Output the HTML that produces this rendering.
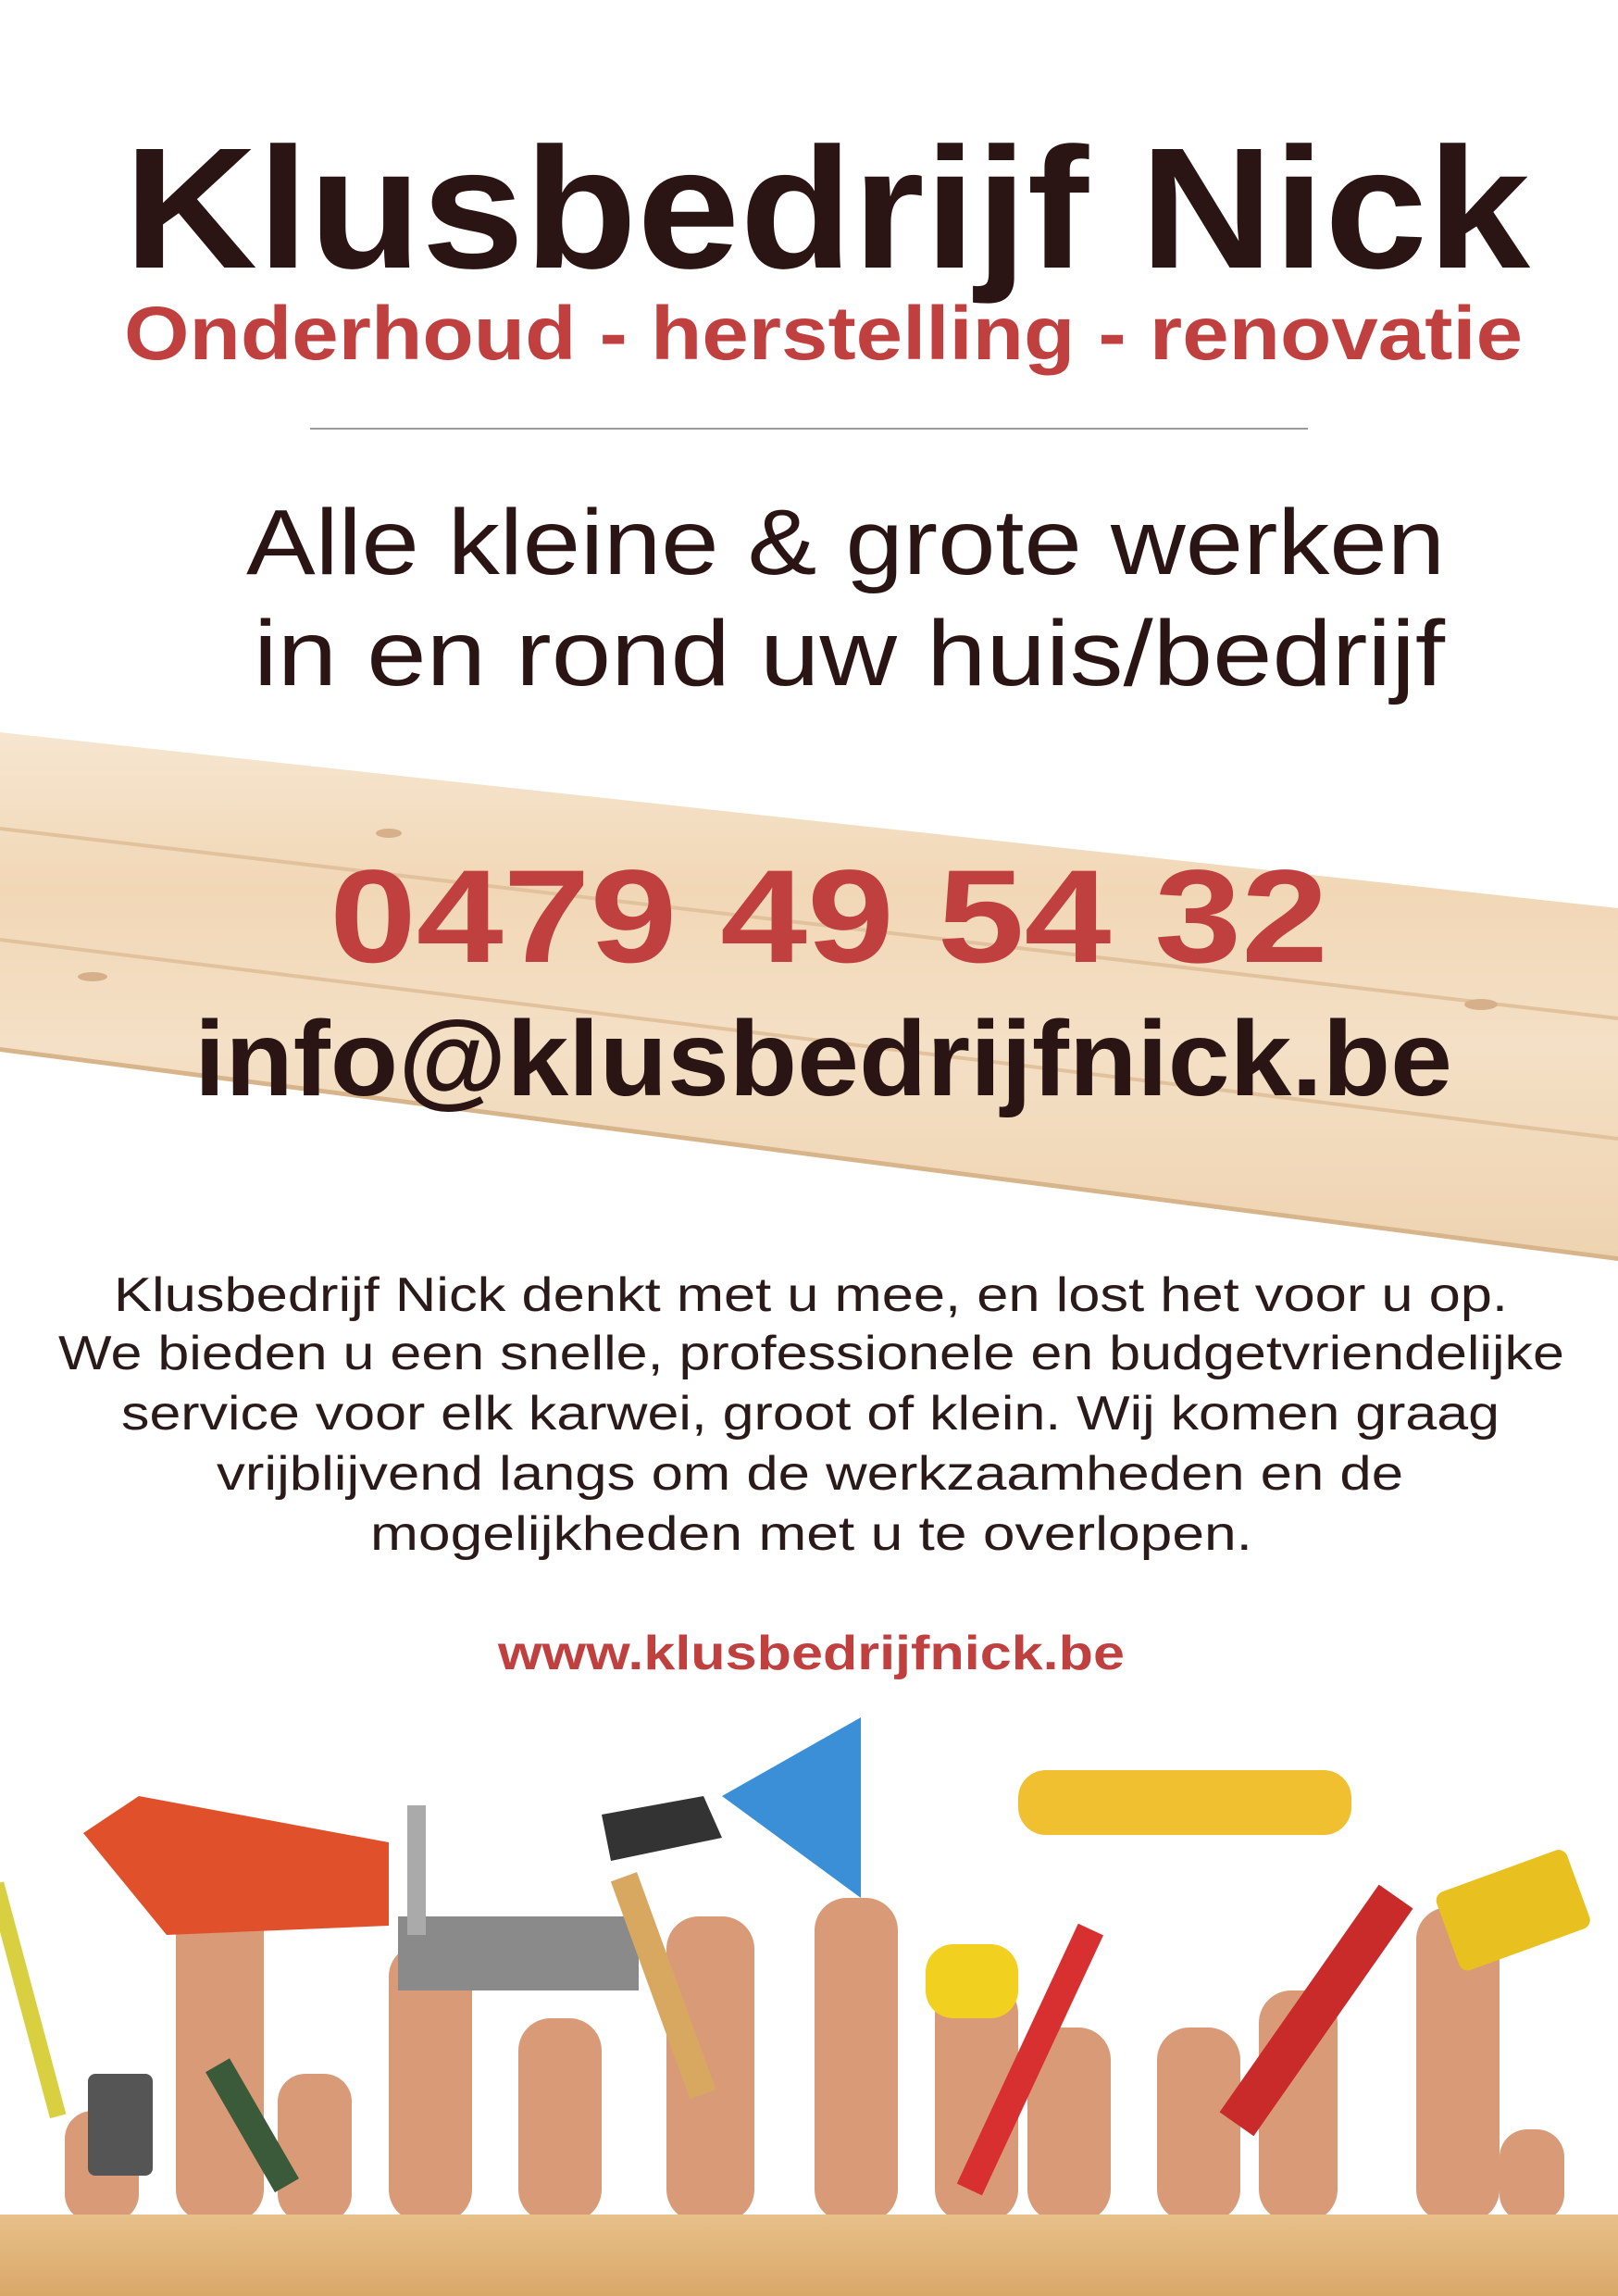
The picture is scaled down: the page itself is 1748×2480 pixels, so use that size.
<!DOCTYPE html>
<html><head><meta charset="utf-8"><style>
html,body{margin:0;padding:0;background:#fff;}
svg{display:block;}
text{font-family:"Liberation Sans",sans-serif;}
</style></head><body>
<svg width="1748" height="2480" viewBox="0 0 1748 2480" xmlns="http://www.w3.org/2000/svg">
<defs>
<linearGradient id="wood" x1="0" y1="0" x2="0" y2="1">
<stop offset="0" stop-color="#f6e6d0"/><stop offset="0.3" stop-color="#f1d7b6"/><stop offset="0.6" stop-color="#f4e0c6"/><stop offset="1" stop-color="#eed3b0"/>
</linearGradient>
<linearGradient id="strip" x1="0" y1="0" x2="0" y2="1"><stop offset="0" stop-color="#e8c08a"/><stop offset="1" stop-color="#d9a868"/></linearGradient>
</defs>
<rect width="1748" height="2480" fill="#fff"/>
<text x="134" y="289" font-size="186" font-weight="bold" fill="#2b1414" textLength="1519" lengthAdjust="spacingAndGlyphs">Klusbedrijf Nick</text>
<text x="134" y="388" font-size="82" font-weight="bold" fill="#c0403f" textLength="1511" lengthAdjust="spacingAndGlyphs">Onderhoud - herstelling - renovatie</text>
<rect x="335" y="462" width="1078" height="2" fill="#9a9a9a"/>
<text x="266" y="620" font-size="100" fill="#2b1414" textLength="1295" lengthAdjust="spacingAndGlyphs">Alle kleine &amp; grote werken</text>
<text x="274" y="740" font-size="100" fill="#2b1414" textLength="1287" lengthAdjust="spacingAndGlyphs">in en rond uw huis/bedrijf</text>
<polygon points="0,791 1748,981 1748,1357 0,1131" fill="url(#wood)"/>
<line x1="0" y1="895" x2="1748" y2="1100" stroke="#e2c29c" stroke-width="4"/>
<line x1="0" y1="1015" x2="1748" y2="1230" stroke="#e2c29c" stroke-width="4"/>
<polygon points="0,1131 1748,1357 1748,1362 0,1136" fill="#d8b48a"/>
<ellipse cx="420" cy="900" rx="14" ry="5" fill="#d6b08a"/>
<ellipse cx="1600" cy="1085" rx="18" ry="6" fill="#d6b08a"/>
<ellipse cx="100" cy="1055" rx="16" ry="5" fill="#d6b08a"/>
<text x="356" y="1039" font-size="143" font-weight="bold" fill="#c0403f" textLength="1079" lengthAdjust="spacingAndGlyphs">0479 49 54 32</text>
<text x="210" y="1183" font-size="115" font-weight="bold" fill="#2b1414" textLength="1359" lengthAdjust="spacingAndGlyphs">info@klusbedrijfnick.be</text>
<g font-size="52" fill="#2b1a1a">
<text x="123" y="1416" textLength="1506" lengthAdjust="spacingAndGlyphs">Klusbedrijf Nick denkt met u mee, en lost het voor u op.</text>
<text x="63" y="1479" textLength="1627" lengthAdjust="spacingAndGlyphs">We bieden u een snelle, professionele en budgetvriendelijke</text>
<text x="131" y="1544" textLength="1489" lengthAdjust="spacingAndGlyphs">service voor elk karwei, groot of klein. Wij komen graag</text>
<text x="234" y="1609" textLength="1282" lengthAdjust="spacingAndGlyphs">vrijblijvend langs om de werkzaamheden en de</text>
<text x="400" y="1674" textLength="953" lengthAdjust="spacingAndGlyphs">mogelijkheden met u te overlopen.</text>
</g>
<text x="538" y="1803" font-size="52" font-weight="bold" fill="#c0403f" textLength="677" lengthAdjust="spacingAndGlyphs">www.klusbedrijfnick.be</text>
<!-- tools & arms approximation -->
<g fill="#d99a78">
<rect x="70" y="2280" width="80" height="120" rx="30"/>
<rect x="190" y="2040" width="95" height="360" rx="35"/>
<rect x="300" y="2240" width="80" height="160" rx="30"/>
<rect x="420" y="2100" width="90" height="300" rx="35"/>
<rect x="560" y="2180" width="90" height="220" rx="35"/>
<rect x="720" y="2070" width="95" height="330" rx="35"/>
<rect x="880" y="2050" width="90" height="350" rx="35"/>
<rect x="1010" y="2140" width="90" height="260" rx="35"/>
<rect x="1110" y="2190" width="90" height="210" rx="35"/>
<rect x="1250" y="2190" width="90" height="210" rx="35"/>
<rect x="1360" y="2150" width="85" height="250" rx="35"/>
<rect x="1530" y="2060" width="90" height="340" rx="35"/>
<rect x="1620" y="2300" width="70" height="100" rx="30"/>
</g>
<polygon points="90,1980 150,1940 420,1990 420,2080 180,2090" fill="#e0502a"/>
<rect x="20" y="2030" width="18" height="260" fill="#d8d040" transform="rotate(-15 30 2160)"/>
<rect x="95" y="2240" width="70" height="110" rx="8" fill="#555"/>
<rect x="430" y="2070" width="260" height="80" fill="#8a8a8a"/>
<rect x="440" y="1950" width="20" height="140" fill="#aaa"/>
<polygon points="780,1940 930,1855 930,2050" fill="#3b8fd6"/>
<rect x="700" y="2020" width="30" height="250" fill="#d8a860" transform="rotate(-20 715 2140)"/>
<polygon points="650,1960 760,1940 780,1985 660,2010" fill="#333"/>
<rect x="1100" y="1912" width="360" height="70" rx="30" fill="#f0c030"/>
<rect x="1000" y="2100" width="100" height="80" rx="30" fill="#f2d020"/>
<rect x="1100" y="2070" width="30" height="310" fill="#d83030" transform="rotate(25 1115 2220)"/>
<rect x="1400" y="2020" width="45" height="300" fill="#c92a2a" transform="rotate(35 1420 2170)"/>
<rect x="1560" y="2020" width="150" height="90" rx="10" fill="#e8c020" transform="rotate(-20 1630 2065)"/>
<rect x="260" y="2220" width="30" height="150" fill="#3a5a3a" transform="rotate(-30 275 2300)"/>
<rect x="0" y="2392" width="1748" height="88" fill="url(#strip)"/>
</svg>
</body></html>
